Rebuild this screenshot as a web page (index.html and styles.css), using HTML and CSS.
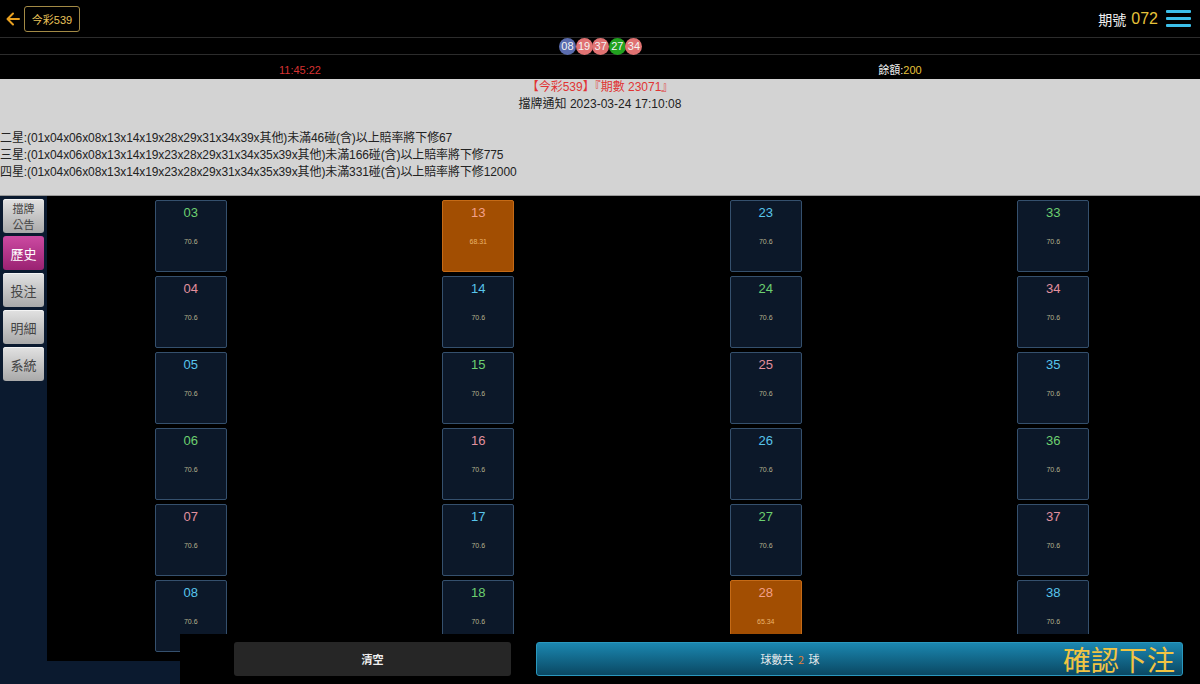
FILE: index.html
```html
<!DOCTYPE html>
<html lang="zh-Hant">
<head>
<meta charset="utf-8">
<title>今彩539</title>
<link rel="stylesheet" href="styles.css">
</head>
<body>
<header class="topbar">
  <div class="tb-left">
    <svg class="back" width="14" height="14" viewBox="0 0 14 14"><path d="M13 7H2M7 1.5L1.5 7L7 12.5" fill="none" stroke="#e8a020" stroke-width="2" stroke-linecap="round" stroke-linejoin="round"/></svg>
    <span class="game-btn">今彩539</span>
  </div>
  <div class="tb-right">
    <span class="period-label">期號</span>
    <span class="period-num">072</span>
    <span class="burger"><i></i><i></i><i></i></span>
  </div>
</header>
<div class="balls">
  <span class="ball blue">08</span><span class="ball red">19</span><span class="ball red">37</span><span class="ball green">27</span><span class="ball red">34</span>
</div>
<div class="status">
  <div class="half time">11:45:22</div>
  <div class="half balance">餘額:<span class="gold">200</span></div>
</div>
<section class="notice">
  <p class="n-title">【今彩539】『期數 23071』</p>
  <p class="n-sub">擋牌通知 2023-03-24 17:10:08</p>
  <div class="n-lines">
    <p>二星:(01x04x06x08x13x14x19x28x29x31x34x39x其他)未滿46碰(含)以上賠率將下修67</p>
    <p>三星:(01x04x06x08x13x14x19x23x28x29x31x34x35x39x其他)未滿166碰(含)以上賠率將下修775</p>
    <p>四星:(01x04x06x08x13x14x19x23x28x29x31x34x35x39x其他)未滿331碰(含)以上賠率將下修12000</p>
  </div>
</section>
<main class="main">
  <nav class="side">
    <button class="sbtn two"><span>擋牌</span><span>公告</span></button>
    <button class="sbtn active">歷史</button>
    <button class="sbtn">投注</button>
    <button class="sbtn">明細</button>
    <button class="sbtn">系統</button>
  </nav>
  <div class="grid">
    <div class="card"><span class="num g">03</span><span class="odds">70.6</span></div>
    <div class="card"><span class="num p">04</span><span class="odds">70.6</span></div>
    <div class="card"><span class="num c">05</span><span class="odds">70.6</span></div>
    <div class="card"><span class="num g">06</span><span class="odds">70.6</span></div>
    <div class="card"><span class="num p">07</span><span class="odds">70.6</span></div>
    <div class="card"><span class="num c">08</span><span class="odds">70.6</span></div>

    <div class="card sel"><span class="num">13</span><span class="odds">68.31</span></div>
    <div class="card"><span class="num c">14</span><span class="odds">70.6</span></div>
    <div class="card"><span class="num g">15</span><span class="odds">70.6</span></div>
    <div class="card"><span class="num p">16</span><span class="odds">70.6</span></div>
    <div class="card"><span class="num c">17</span><span class="odds">70.6</span></div>
    <div class="card"><span class="num g">18</span><span class="odds">70.6</span></div>

    <div class="card"><span class="num c">23</span><span class="odds">70.6</span></div>
    <div class="card"><span class="num g">24</span><span class="odds">70.6</span></div>
    <div class="card"><span class="num p">25</span><span class="odds">70.6</span></div>
    <div class="card"><span class="num c">26</span><span class="odds">70.6</span></div>
    <div class="card"><span class="num g">27</span><span class="odds">70.6</span></div>
    <div class="card sel"><span class="num">28</span><span class="odds">65.34</span></div>

    <div class="card"><span class="num g">33</span><span class="odds">70.6</span></div>
    <div class="card"><span class="num p">34</span><span class="odds">70.6</span></div>
    <div class="card"><span class="num c">35</span><span class="odds">70.6</span></div>
    <div class="card"><span class="num g">36</span><span class="odds">70.6</span></div>
    <div class="card"><span class="num p">37</span><span class="odds">70.6</span></div>
    <div class="card"><span class="num c">38</span><span class="odds">70.6</span></div>
  </div>
</main>
<footer class="footer">
  <button class="clear">清空</button>
  <button class="confirm">
    <span class="count">球數共 <b>2</b> 球</span>
    <span class="go">確認下注</span>
  </button>
</footer>
</body>
</html>
```
FILE: styles.css
```css
* { box-sizing: border-box; }
html, body { margin: 0; padding: 0; }
body {
  width: 1200px;
  height: 684px;
  overflow: hidden;
  background: #0b1a2f;
  font-family: "Liberation Sans", "Noto Sans CJK TC", Arial, sans-serif;
  color: #fff;
}
p { margin: 0; }

.topbar {
  height: 38px;
  background: #000;
  border-bottom: 1px solid #2c2c2c;
  display: flex;
  align-items: center;
  justify-content: space-between;
  padding: 0 9px 0 6px;
}
.tb-left { display: flex; align-items: center; gap: 4px; padding-top: 1px; }
.back { display: block; }
.game-btn {
  display: inline-flex;
  align-items: center;
  justify-content: center;
  width: 56px;
  height: 26px;
  border: 1px solid #a38a45;
  border-radius: 3px;
  color: #eac35a;
  font-size: 11px;
}
.tb-right { display: flex; align-items: center; }
.period-label { font-size: 14px; color: #f2f2f2; margin-right: 5px; }
.period-num { font-size: 16px; color: #e6c23a; margin-right: 8px; }
.burger { display: flex; flex-direction: column; gap: 4px; width: 25px; }
.burger i { display: block; height: 3px; background: #3cc0ea; border-radius: 1px; }

.balls {
  height: 17px;
  background: #000;
  border-bottom: 1px solid #2c2c2c;
  display: flex;
  justify-content: center;
  align-items: center;
  padding-left: 1px;
}
.ball {
  width: 17px;
  height: 17px;
  border-radius: 50%;
  display: inline-flex;
  align-items: center;
  justify-content: center;
  font-size: 11px;
  color: #f4f4f4;
  margin-right: -0.4px;
}
.ball.blue { background: #5a6cae; }
.ball.red { background: #e07272; }
.ball.green { background: #21a11f; }

.status {
  height: 24px;
  background: #000;
  display: flex;
  font-size: 11px;
  line-height: 13px;
  padding-top: 9px;
}
.half { flex: 1; text-align: center; }
.time { color: #d63232; }
.balance { color: #eee; }
.gold { color: #e6c23a; }

.notice {
  height: 117px;
  background: #d3d3d3;
  color: #222;
  font-size: 12px;
  line-height: 17px;
  border-bottom: 1px solid #999;
}
.n-title { text-align: center; color: #e03434; }
.n-sub { text-align: center; }
.n-lines { margin-top: 17px; letter-spacing: -0.1px; }

.main { display: flex; height: 465px; }
.side {
  width: 47px;
  flex: none;
  display: flex;
  flex-direction: column;
  gap: 3px;
  padding: 3px 0 0 3px;
}
.sbtn {
  width: 41px;
  height: 34px;
  border: none;
  border-radius: 3px;
  background: linear-gradient(#e2e2e2, #a9a9a9);
  color: #444;
  font-family: "Noto Sans CJK TC", sans-serif;
  font-size: 13px;
  padding: 0;
  box-shadow: inset 0 1px 0 #f4f4f4;
}
.sbtn.two {
  display: flex;
  flex-direction: column;
  align-items: center;
  justify-content: center;
  font-size: 11px;
  line-height: 16px;
}
.sbtn.two span { display: block; height: 16px; }
.sbtn.active {
  background: linear-gradient(#cc4aa2, #9a2272);
  color: #fff;
  box-shadow: none;
}

.grid {
  flex: 1;
  background: #000;
  overflow: hidden;
  display: grid;
  grid-template-columns: repeat(4, 1fr);
  grid-template-rows: repeat(6, 72px);
  grid-auto-flow: column;
  row-gap: 4px;
  justify-items: center;
  padding: 4px 3px 0 0;
}
.card {
  width: 72px;
  height: 72px;
  background: #0c1829;
  border: 1px solid #35506d;
  border-radius: 2px;
  display: flex;
  flex-direction: column;
  align-items: center;
}
.num { font-size: 13px; line-height: 15px; margin-top: 4px; }
.num.g { color: #6cd070; }
.num.p { color: #e2909e; }
.num.c { color: #58c5ec; }
.odds { font-size: 7px; color: #b6b38f; margin-top: 18px; }
.card.sel { background: #a24e02; border-color: #c56a16; }
.card.sel .num { color: #f4a08a; }
.card.sel .odds { color: #eab46a; }

.footer {
  position: fixed;
  left: 180px;
  right: 0;
  bottom: 0;
  height: 50px;
  background: #000;
  display: flex;
  align-items: center;
  padding: 0 17px 0 54px;
  gap: 25px;
}
.clear {
  width: 277px;
  height: 34px;
  border: none;
  border-radius: 3px;
  background: #262626;
  color: #f0f0f0;
  font-family: "Noto Sans CJK TC", sans-serif;
  font-size: 11px;
  font-weight: bold;
}
.confirm {
  flex: 1;
  height: 34px;
  border: 1px solid #2a98be;
  border-radius: 3px;
  background: linear-gradient(#1b87b0, #0a4863);
  display: flex;
  align-items: center;
  padding: 0 7px 0 0;
  font-family: "Noto Sans CJK TC", sans-serif;
}
.count { flex: 1; text-align: center; font-size: 11px; color: #eee; padding-right: 20px; }
.count b { font-weight: normal; color: #e38034; margin: 0 2px; }
.go { font-size: 28px; color: #f1c443; line-height: 34px; letter-spacing: 0; }
```
